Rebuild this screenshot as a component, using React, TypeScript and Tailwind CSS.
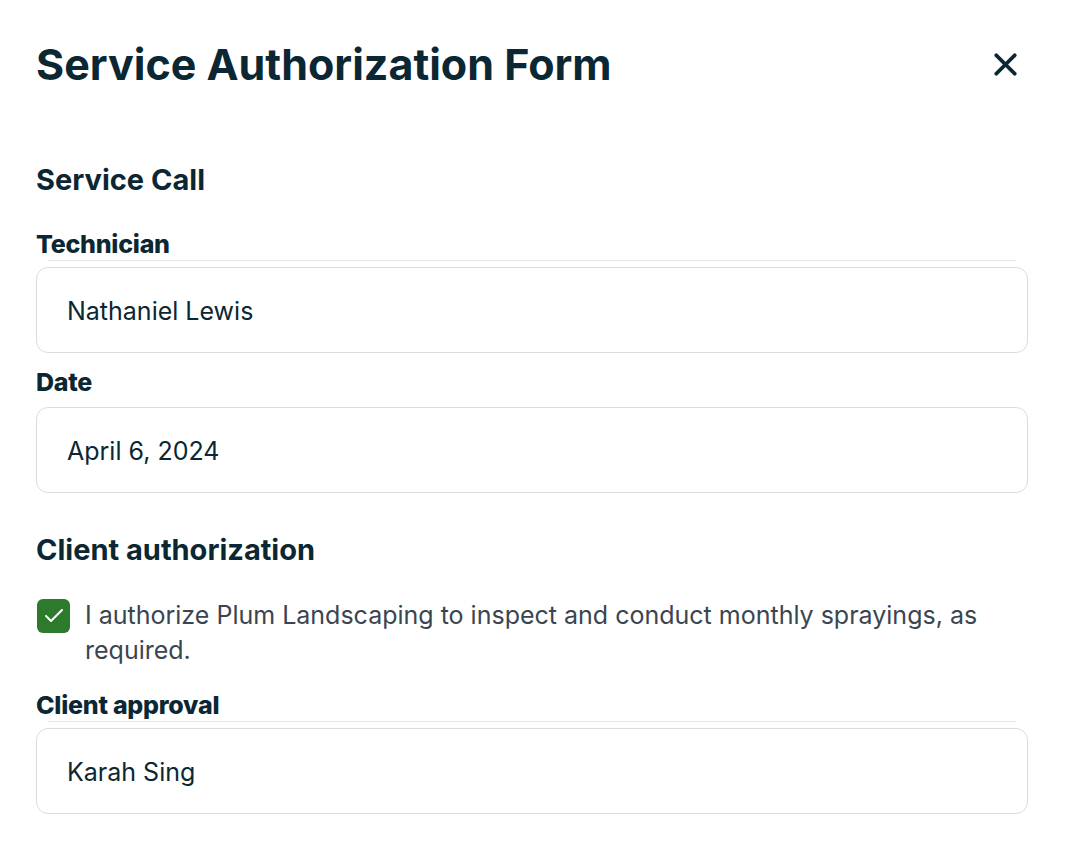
import { X, Check } from 'lucide-react'

const Label = ({ children, divider }: { children: string; divider?: boolean }) => (
  <div className="flex flex-col">
    <label className="text-[25px] leading-[28px] font-extrabold tracking-[-0.01em] text-[#0b2733]">{children}</label>
    {divider && <div className="mx-3 mt-[2px] h-px bg-[#e3e6e8]" />}
  </div>
)

const Field = ({ value }: { value: string }) => (
  <div className="flex h-[86px] items-center rounded-xl border border-[#d9dde0] bg-white pt-[3px] pl-[30px] text-[25px] text-[#0b2733]">
    {value}
  </div>
)

export default function App() {
  return (
    <div className="min-h-screen bg-white pt-[40px] pr-[42px] pl-9 font-['Inter',sans-serif]">
      <div className="flex items-center justify-between">
        <h1 className="text-[43px] leading-[48px] font-bold text-[#0b2733]">Service Authorization Form</h1>
        <button className="mr-[4px] text-[#0b2733]">
          <X size={37} strokeWidth={2.5} />
        </button>
      </div>

      <h2 className="mt-[76px] text-[29px] leading-[32px] font-bold text-[#0b2733]">Service Call</h2>

      <div className="mt-[34px]">
        <Label divider>Technician</Label>
        <div className="mt-[6px]">
          <Field value="Nathaniel Lewis" />
        </div>
      </div>

      <div className="mt-[15px]">
        <Label>Date</Label>
        <div className="mt-[11px]">
          <Field value="April 6, 2024" />
        </div>
      </div>

      <h2 className="mt-[41px] text-[29px] leading-[32px] font-bold text-[#0b2733]">Client authorization</h2>

      <div className="mt-[32px] flex items-start gap-[15px]">
        <div className="ml-px mt-[1px] flex h-[34px] w-[33px] shrink-0 items-center justify-center rounded-md bg-[#2e7a2c] text-white">
          <Check size={24} strokeWidth={2} />
        </div>
        <p className="text-[25px] leading-[35px] text-[#3b4550]">
          I authorize Plum Landscaping to inspect and conduct monthly sprayings, as required.
        </p>
      </div>

      <div className="mt-[23px]">
        <Label divider>Client approval</Label>
        <div className="mt-[6px]">
          <Field value="Karah Sing" />
        </div>
      </div>
    </div>
  )
}
